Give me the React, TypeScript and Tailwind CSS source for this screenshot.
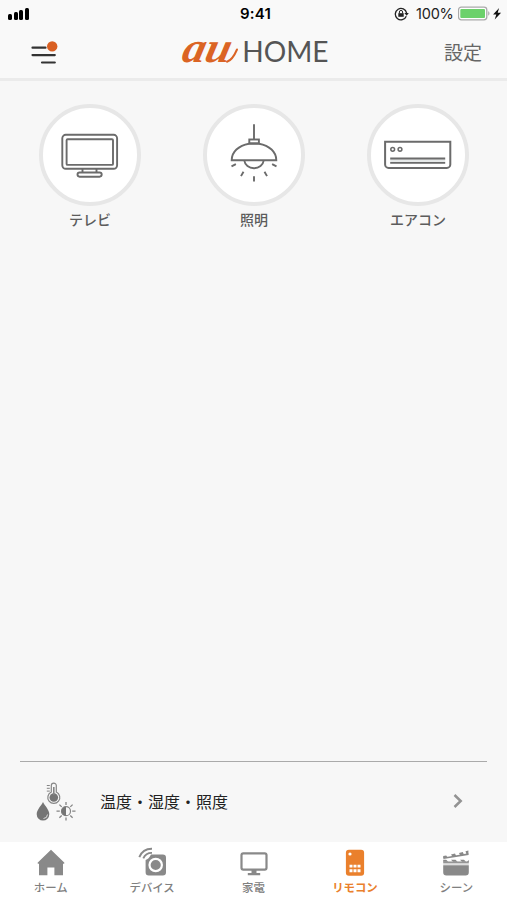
import type { ReactNode } from 'react';

const JP = "font-['Noto_Sans_CJK_JP',sans-serif]";

function TvIcon() {
  return (
    <svg width="94" height="94" viewBox="0 0.500 94 94" fill="none" stroke="#6b6b6b" strokeWidth="1.900">
      <rect x="19.3" y="27.3" width="54.8" height="34" rx="3.5" />
      <rect x="23.6" y="31.8" width="46.4" height="25.6" rx="1" />
      <path d="M39.5 61.3v3.8M53.5 61.3v3.8" />
      <rect x="34.5" y="65" width="24.2" height="4.2" rx="2.1" />
    </svg>
  );
}

function LampIcon() {
  return (
    <svg width="94" height="94" viewBox="0 0.500 94 94" fill="none" stroke="#6b6b6b" strokeWidth="1.900">
      <path d="M47 16.8v15" />
      <rect x="42.3" y="32" width="9.6" height="3.8" />
      <path d="M42 36.2C31.5 38 24.7 44.5 24.7 52.7h44.6c0-8.200-6.800-14.700-17.300-16.500z" />
      <path d="M37.300 53c.6 4.600 4.600 7.700 9.700 7.700s9.100-3.100 9.700-7.700" />
      <path d="M24.500 58.900l4.400-2.300M69.500 58.900l-4.400-2.300M34 68.600l2.500-4.400M60 68.600l-2.500-4.400M47 68.700v5.300" />
    </svg>
  );
}

function AirConIcon() {
  return (
    <svg width="94" height="94" viewBox="0.300 0.700 94 94" fill="none" stroke="#6b6b6b" strokeWidth="2">
      <path d="M14.400 34.500h65.200v22.600a3.500 3.500 0 0 1-3.500 3.500h-58.200a3.500 3.500 0 0 1-3.500-3.500z" />
      <path d="M19.500 53.300h55" stroke="#e6e9e9" strokeWidth="3" />
      <circle cx="22" cy="42" r="1.900" strokeWidth="1.500" />
      <circle cx="29.300" cy="42" r="1.900" strokeWidth="1.500" />
      <path d="M19.500 51.200h55M19.500 55.500h55" strokeWidth="1.800" />
    </svg>
  );
}

function ClimateIcon() {
  return (
    <svg width="42" height="42" viewBox="35 779 42 42" fill="none" stroke="#858585">
      <path d="M51.300 791v-6.400a2.500 2.500 0 0 1 5 0v6.400a6 6 0 1 1-5 0z" strokeWidth="1.200" />
      <circle cx="53.800" cy="796.500" r="4.300" fill="#757575" stroke="none" />
      <path d="M53.800 786v8" strokeWidth="1.600" />
      <path d="M46.800 784.500h3M46.800 787.300h3M46.800 790.100h3" strokeWidth="1" />
      <path d="M43 801c-1.800 3.800-6.300 7.700-6.300 12.300a6.300 6.300 0 0 0 12.600 0c0-4.600-4.500-8.500-6.300-12.300z" fill="#757575" stroke="none" />
      <path d="M43.500 817.500a4.200 4.200 0 0 0 4-4" stroke="#ddd" strokeWidth="1" />
      <circle cx="66" cy="810.200" r="4.500" strokeWidth="1.200" />
      <path d="M66 805.700a4.500 4.500 0 0 0 0 9z" fill="#757575" stroke="none" />
      <path d="M66 801v3M66 816.400v3M56.500 810.200h3.300M72.200 810.200h3.300M59.400 803.600l2.300 2.300M72.600 803.600l-2.300 2.300M59.400 816.800l2.300-2.300M72.600 816.800l-2.300-2.300" strokeWidth="1.300" />
    </svg>
  );
}

function HomeIcon() {
  return (
    <svg width="34" height="34" viewBox="0 0 34 34" fill="#898989">
      <path d="M17 4.700L30.200 17.500c.5.500.3 1.200-.5 1.200H29v11.600h-8.600v-7.800h-7v7.800H5V18.700h-.7c-.8 0-1-.7-.5-1.200z" />
    </svg>
  );
}

function DeviceIcon() {
  return (
    <svg width="34" height="34" viewBox="0 0 34 34" fill="none">
      <path d="M16 9.500h11.800a3.200 3.200 0 0 1 3.200 3.200v14.600a3.200 3.200 0 0 1-3.200 3.200h-14a3.200 3.200 0 0 1-3.200-3.200V15c2-.5 4-2.500 5.400-5.500z" fill="#898989" />
      <circle cx="20.700" cy="20" r="6.200" stroke="#fff" strokeWidth="2.200" />
      <path d="M4.300 12.200C6.300 7.300 11 3.700 17 3.800M8.300 13.300c1.500-3.200 4.500-5.500 8.700-5.400" stroke="#898989" strokeWidth="1.900" />
    </svg>
  );
}

function ApplianceIcon() {
  return (
    <svg width="34" height="34" viewBox="0 0 34 34" fill="none">
      <rect x="4.500" y="8.300" width="25" height="16.300" rx="1.800" stroke="#898989" strokeWidth="2.200" />
      <path d="M14.500 25h5v3h3.700v2.200H10.800V28h3.700z" fill="#898989" />
    </svg>
  );
}

function RemoteIcon() {
  return (
    <svg width="34" height="34" viewBox="0 0 34 34" fill="#fff">
      <rect x="7.900" y="4.800" width="18.200" height="26" rx="3" fill="#ea802c" />
      <circle cx="12" cy="9" r="1.600" />
      <path d="M11.500 19.700h3v2.900h-3zM15.500 19.700h3v2.900h-3zM19.500 19.700h3v2.900h-3zM11.500 24.300h3v2.900h-3zM15.500 24.300h3v2.900h-3zM19.500 24.300h3v2.900h-3z" />
    </svg>
  );
}

function SceneIcon() {
  return (
    <svg width="34" height="34" viewBox="0 0 34 34" fill="none">
      <path d="M4.200 20.300h25.600v7a3.200 3.200 0 0 1-3.200 3.200H7.400a3.200 3.200 0 0 1-3.200-3.200z" fill="#898989" />
      <path d="M4.200 18.900h25.600" stroke="#c4c4c4" strokeWidth="1.300" />
      <path d="M4.200 17.200h25.600" stroke="#898989" strokeWidth="1.400" />
      <path d="M4.200 14.800h3l2 2h-5zM12 14.800h4.500l2 2h-4.500zM21 14.800h4l2 2h-4z" fill="#898989" />
      <path d="M28 16.800l1.800-1.800v2z" fill="#898989" />
      <path d="M4.400 13.300L29.500 9.100" stroke="#898989" strokeWidth="1.600" />
      <path d="M4.200 10.900l3-.5 1.500 2.100-4.500.7zM12 9.400l4-1 1.200 2.700-3.700.7zM20 8l3.800-1 1.200 2.700-3.800.700zM26.500 6.300l2.900-.7v3.700l-1.900.1z" fill="#898989" />
    </svg>
  );
}

function StatusBar() {
  return (
    <div className="grid h-7 grid-cols-[1fr_60px_1fr] items-center pl-2 pr-1 text-black">
      <div className="flex h-3 items-end gap-[1.500px]">
        <i className="h-[6px] w-1 rounded-[1.500px] bg-black" />
        <i className="h-2 w-1 rounded-[1.500px] bg-black" />
        <i className="h-[10px] w-1 rounded-[1.500px] bg-black" />
        <i className="h-3 w-1 rounded-[1.500px] bg-black" />
      </div>
      <div className="whitespace-nowrap text-center font-['Inter',sans-serif] text-[15px] font-semibold leading-7 tracking-[0.200px]">9:41</div>
      <div className="flex items-center justify-end">
        <svg width="15" height="14" viewBox="0 0 15 14" fill="none" stroke="#222" strokeWidth="1.300">
          <path d="M12.300 9.300A5.700 5.700 0 1 1 12.600 6" />
          <path d="M10.300 6h4.500l-2.100 2.800z" fill="#222" stroke="none" />
          <path d="M4.300 6.200h5.400v3.600H4.300z" fill="#222" stroke="none" />
          <path d="M5.400 6.500V5a1.600 1.600 0 0 1 3.200 0v1.500" strokeWidth="1" />
        </svg>
        <span className="ml-[7px] w-[39px] whitespace-nowrap font-['Inter',sans-serif] text-[14.500px] leading-7 tracking-[-0.200px] text-[#222]">100%</span>
        <svg className="ml-[3px]" width="45" height="16" viewBox="0.500 0.500 45 16">
          <rect x="1" y="1.700" width="28.300" height="12.600" rx="2.800" fill="#fff" stroke="#aaa" strokeWidth="1.300" />
          <rect x="2.800" y="3.400" width="24.700" height="9.200" rx="1" fill="#6cd16b" />
          <path d="M30.700 5.800c1.700.5 1.700 3.900 0 4.400z" fill="#aaa" />
          <path d="M41.600 2.600l-6 6.300h3.200l-1.600 5 6.400-6.700h-3.400z" fill="#111" />
        </svg>
      </div>
    </div>
  );
}

function Header() {
  return (
    <div className="grid h-[50px] grid-cols-[170px_1fr_170px] items-center">
      <svg className="ml-7" width="34" height="32" viewBox="28 37 34 32" stroke="#333" strokeWidth="2.200" strokeLinecap="round">
        <path d="M32.500 47.700h13M32.500 55.100h22.300M42 62.500h12.800" />
        <circle cx="52.200" cy="46.400" r="5.200" fill="#d95f22" stroke="none" />
      </svg>
      <svg className="-my-2" width="167" height="66" viewBox="170 20 167 66">
        <g transform="translate(180.500 62.300) skewX(-13)">
          <text x="0" y="0" textLength="48" lengthAdjust="spacingAndGlyphs" fontFamily="Liberation Serif, serif" fontSize="43" fontWeight="700" fontStyle="italic" fill="#db6424">au</text>
        </g>
        <path d="M227 61.800q5.500-1.800 10-12.300" fill="none" stroke="#db6424" strokeWidth="2" strokeLinecap="round" />
        <text x="242.300" y="62.300" textLength="86.300" lengthAdjust="spacingAndGlyphs" fontFamily="Lato, sans-serif" fontSize="28.500" fill="#555">HOME</text>
      </svg>
      <span className={`${JP} pb-[3px] pr-[25px] text-right text-[19px] leading-none text-[#666]`}>設定</span>
    </div>
  );
}

function Appliance({ label, children }: { label: string; children: ReactNode }) {
  return (
    <div className="flex w-[102px] flex-col items-center">
      <div className="flex size-[102px] items-center justify-center rounded-full border-4 border-[#e7e7e7] bg-white">{children}</div>
      <span className={`${JP} mt-[3px] text-[14px] font-medium leading-5 text-[#5c5c5c]`}>{label}</span>
    </div>
  );
}

function Tab({ label, active, children }: { label: string; active?: boolean; children: ReactNode }) {
  return (
    <div className="flex flex-1 flex-col items-center pt-[3px]">
      {children}
      <span className={`${JP} text-[11.400px] leading-4 ${active ? 'font-bold text-[#ea802c]' : 'font-medium text-[#808080]'}`}>{label}</span>
    </div>
  );
}

export default function App() {
  return (
    <div className="flex h-[900px] w-[507px] flex-col overflow-hidden bg-[#f7f7f7]">
      <header className="h-[81px] shrink-0 border-b-[3px] border-[#ebebeb] bg-[#f9f9f9]">
        <StatusBar />
        <Header />
      </header>
      <main className="flex flex-1 flex-col">
        <div className="flex justify-between pl-[39px] pr-[38px] pt-[23px]">
          <Appliance label="テレビ"><TvIcon /></Appliance>
          <Appliance label="照明"><LampIcon /></Appliance>
          <Appliance label="エアコン"><AirConIcon /></Appliance>
        </div>
        <div className="mx-5 mt-auto flex h-[81px] items-center border-t border-[#aaa] pb-[3px] pl-[15px] pr-[22px]">
          <ClimateIcon />
          <span className={`${JP} ml-[23px] text-[16px] leading-6 text-[#222]`}>温度・湿度・照度</span>
          <svg className="ml-auto" width="14" height="18" viewBox="0 0 14 18" fill="none" stroke="#939393" strokeWidth="2.500">
            <path d="M3.500 3l6.200 6-6.200 6" />
          </svg>
        </div>
      </main>
      <nav className="flex h-[58px] shrink-0 bg-white">
        <Tab label="ホーム"><HomeIcon /></Tab>
        <Tab label="デバイス"><DeviceIcon /></Tab>
        <Tab label="家電"><ApplianceIcon /></Tab>
        <Tab label="リモコン" active><RemoteIcon /></Tab>
        <Tab label="シーン"><SceneIcon /></Tab>
      </nav>
    </div>
  );
}
